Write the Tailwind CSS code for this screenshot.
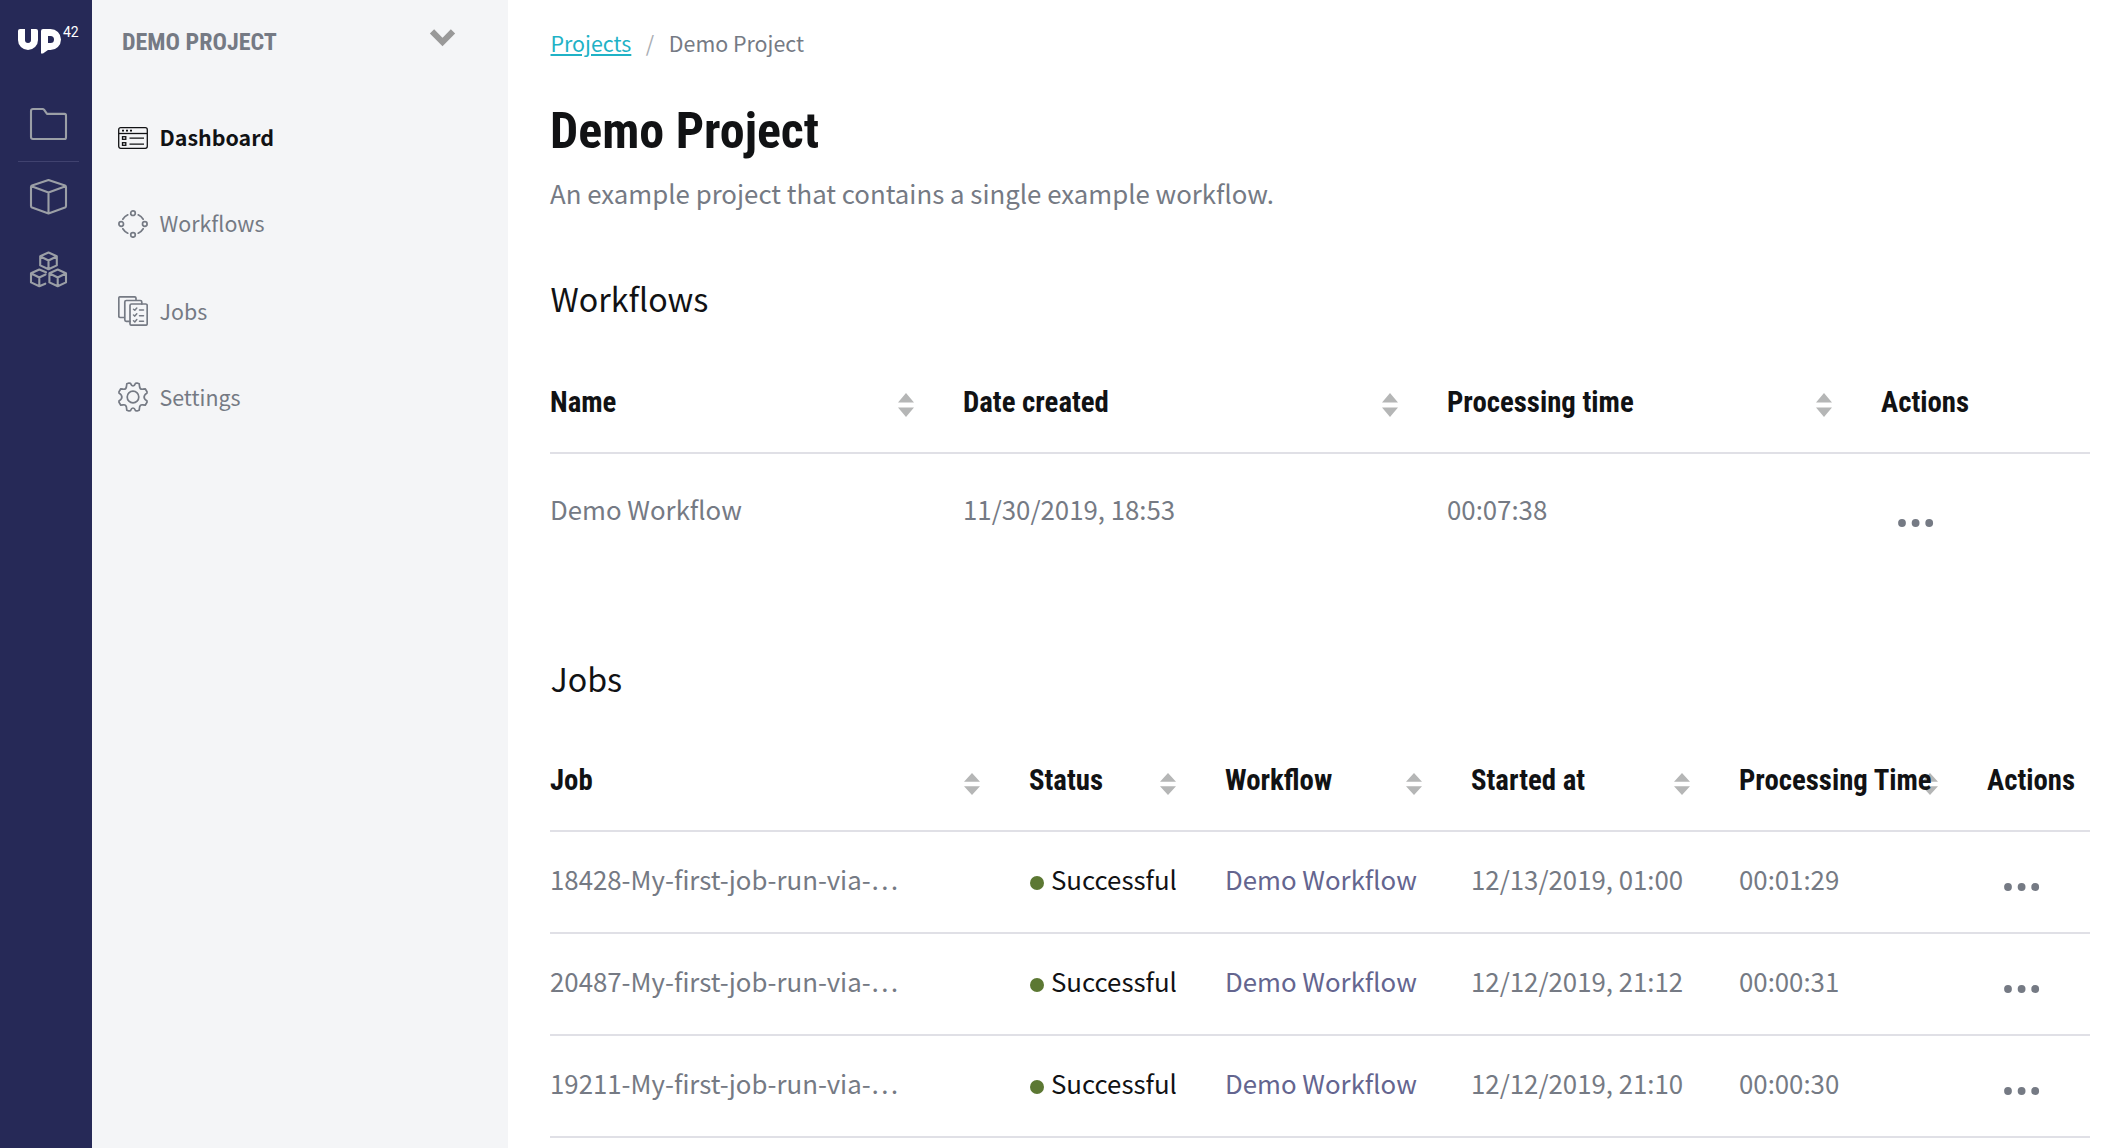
<!DOCTYPE html>
<html lang="en">
<head>
<meta charset="utf-8">
<title>Demo Project</title>
<script src="https://cdn.jsdelivr.net/npm/@tailwindcss/browser@4"></script>
</head>
<body class="bg-white">
<svg class="hidden">
  <symbol id="sort" viewBox="0 0 16 24" preserveAspectRatio="none"><path d="M8 0l8 9.500H0zM8 24l8-9.500H0z" fill="#b5b6b6"/></symbol>
  <symbol id="more" viewBox="0 0 36 8"><circle cx="4" cy="4" r="3.9"/><circle cx="17.6" cy="4" r="3.9"/><circle cx="31.2" cy="4" r="3.9"/></symbol>
</svg>
<div class="flex h-[1148px] w-[2108px] overflow-hidden font-['Noto_Sans_CJK_SC','Noto_Sans',sans-serif] text-[25.8px] leading-10 text-[#757a84]">

  <!-- Icon rail -->
  <nav class="flex w-[92px] shrink-0 flex-col bg-[#262957] text-[#9b9fa6]">
    <div class="mt-[27px] ml-[18px] flex h-[27px] w-[64px]" aria-label="UP42">
      <div class="mt-[2px] h-[21px] w-[20px] rounded-t-[2px] rounded-b-[10px] border-x-[7px] border-b-[7px] border-white"></div>
      <div class="relative mt-[2px] ml-[2.5px] h-[21px] w-[20.5px] rounded-l-[2px] rounded-r-[10.5px] border-[7px] border-white">
        <svg class="absolute top-[7px] -left-[7px] h-[11px] w-[10px]" viewBox="0 0 10 11"><path d="M0 0h7v7L2 10.500H0z" fill="#fff"/></svg>
      </div>
      <span class="ml-[2px] font-['Roboto',sans-serif] text-[14px] leading-[11px] text-white">42</span>
    </div>
    <svg class="mt-[53px] ml-[29px] h-[34px] w-[39px]" viewBox="0 0 39 34" fill="none" stroke="currentColor" stroke-width="2.1" stroke-linejoin="round"><path d="M4 2h9.500q1 0 1.700.9L18 6.900h17.500q1.500 0 1.500 1.500V30.500q0 1.500-1.500 1.500H4q-2 0-2-2V4q0-2 2-2z"/></svg>
    <div class="mt-5 ml-[18px] h-px w-[61px] bg-[#40426f]"></div>
    <svg class="mt-4 ml-[29px] h-[38px] w-[39px]" viewBox="0 0 39 38" fill="none" stroke="currentColor" stroke-width="2.1" stroke-linejoin="round" stroke-linecap="round"><path d="M19.500 2L36 7.500q1 .4 1 1.500v19q0 1-1 1.500L19.500 35.500 3 29.500q-1-.5-1-1.500V9q0-1.100 1-1.500zM2.500 8.300l17 6.200 17-6.200M19.500 14.500v21"/></svg>
    <svg class="mt-[35px] ml-[29px] h-[38px] w-[39px]" viewBox="0 0 39 38" fill="none" stroke="currentColor" stroke-width="2.1" stroke-linejoin="round" stroke-linecap="round">
      <path d="M19.500 1.500l8.300 3.700v9.200l-8.300 3.900-8.300-3.900V5.200zM11.500 5.500l8 4 8-4M19.500 9.500v8"/>
      <path d="M17 21.300l-6.700-2.800L2 22.200v9.200l8.300 3.900 6-2.600M2.300 22.500l8 4 6.200-3M10.300 26.500v8"/>
      <path d="M28.700 18.500l8.300 3.700v9.200l-8.300 3.900-8.300-3.900v-9.200zM20.700 22.500l8 4 8-4M28.700 26.500v8"/>
    </svg>
  </nav>

  <!-- Project navigation -->
  <aside class="w-[416px] shrink-0 bg-[#f4f5f7] text-[21.4px]">
    <div class="mt-[26px] flex h-8 justify-between pr-[52px] pl-[30px]">
      <span class="font-['Roboto_Condensed','Roboto',sans-serif] text-[24px] leading-8 font-bold">DEMO PROJECT</span>
      <svg class="mt-[2px] h-[20px] w-[27px]" viewBox="0 0 27 20" fill="none" stroke="#999" stroke-width="6"><path d="M3 3.300L13.500 14 24 3.300"/></svg>
    </div>
    <ul class="mt-[59px] pl-[26px]">
      <li class="flex h-10 items-center gap-[11.5px] font-bold text-[#111214]">
        <svg class="mt-[2px] h-[22px] w-[30px]" viewBox="0 0 30 22" fill="none" stroke="currentColor" stroke-width="1.300"><rect x=".7" y=".7" width="28.600" height="20.600" rx="2"/><path d="M1 6.500h28"/><path d="M4 3.600h2M8 3.600h2M12 3.600h2" stroke-width="1.800"/><rect x="4.500" y="9.700" width="3.300" height="2.600"/><rect x="4.500" y="15.700" width="3.300" height="2.600"/><path d="M11.500 11.200h14.500M11.500 17.200h14.500"/></svg>
        Dashboard</li>
      <li class="mt-[46px] flex h-10 items-center gap-[11.5px]">
        <svg class="mt-[2px] h-[28px] w-[30px]" viewBox="0 0 30 28" fill="none" stroke="currentColor" stroke-width="1.700" stroke-linecap="round"><circle cx="15" cy="3.200" r="2.300"/><circle cx="15" cy="24.900" r="2.300"/><circle cx="3.200" cy="14" r="2.300"/><circle cx="26.800" cy="14" r="2.300"/><path d="M9.800 4.800q-3.300 1.600-5 4.500M20.200 4.800q3.300 1.600 5 4.500M9.800 23.200q-3.300-1.600-5-4.500M20.200 23.200q3.300-1.600 5-4.500"/></svg>
        Workflows</li>
      <li class="mt-[48px] flex h-10 items-center gap-[11.5px]">
        <svg class="h-[30px] w-[30px]" viewBox="0 0 30 30" fill="none" stroke="currentColor" stroke-width="1.700" stroke-linejoin="round" stroke-linecap="round"><rect x="12" y="8" width="17.200" height="21.200" rx="1.500"/><path d="M12 25.300H8.300q-1.500 0-1.500-1.500V6q0-1.500 1.500-1.500h14q1.500 0 1.500 1.500v2M6.500 21.500H2.300Q.8 21.500.8 20V2.300Q.8.800 2.300.800h14.200q1.500 0 1.500 1.500v2"/><path d="M15.500 13.200l1.300 1.100 2-2.300M15.500 19l1.300 1.100 2-2.300M15.500 24.800l1.300 1.100 2-2.300M21.500 13.900h4M21.500 19.700h4M21.500 25.300h4" stroke-width="1.500"/></svg>
        Jobs</li>
      <li class="mt-[46px] flex h-10 items-center gap-[11.5px]">
        <svg class="h-[30px] w-[30px]" viewBox="0 0 30 30" fill="none" stroke="currentColor" stroke-width="1.700" stroke-linejoin="round"><circle cx="15" cy="15" r="5.800"/><path d="M11 1l-2.200.800-.4 3.200q-.5 2.500-3 2.200L2.800 6.800 1 9.800v1.200l2 1.700q1.800 2.300 0 4.600l-2 1.700v1.200l1.800 3 2.600-.4q2.500-.3 3 2.200l.4 3.200 2.200.800 1.500-.400q1-2.600 2.500-2.600t2.500 2.600l1.500.400 2.200-.800.4-3.200q.5-2.500 3-2.200l2.600.400 1.800-3V19l-2-1.700q-1.800-2.300 0-4.600l2-1.700V9.800l-1.800-3-2.600.400q-2.500.300-3-2.200l-.4-3.200L19 1l-1.500.400Q16.500 4 15 4t-2.500-2.600z"/></svg>
        Settings</li>
    </ul>
  </aside>

  <!-- Content -->
  <main class="flex w-[1582px] flex-col pt-[27px] pl-[42px]">
    <div class="flex h-8 pl-[0.5px] text-[21.4px] leading-8">
      <a class="text-[#1fb2c6] underline decoration-2 underline-offset-[2px]">Projects</a>
      <span class="ml-[14.5px] w-[23px] text-[#a9adb3]">/</span>
      <span>Demo Project</span>
    </div>
    <h1 class="mt-[42px] font-['Roboto_Condensed','Roboto',sans-serif] text-[50px] leading-[60px] font-bold text-[#111214]">Demo Project</h1>
    <p class="mt-3">An example project that contains a single example workflow.</p>

    <h2 class="mt-[61px] pl-[0.5px] text-[32.2px] leading-[48px] text-[#111214]">Workflows</h2>
    <section class="mt-[60px] w-[1540px]">
      <div class="grid h-[72px] grid-cols-[413px_484px_434px_209px] border-b-2 border-[#e0e0e6] font-['Roboto_Condensed','Roboto',sans-serif] text-[28.8px] font-bold text-[#111214]">
        <div class="flex justify-between pr-[49px]">Name<svg class="mt-[11px] h-6 w-4"><use href="#sort"/></svg></div>
        <div class="flex justify-between pr-[49px]">Date created<svg class="mt-[11px] h-6 w-4"><use href="#sort"/></svg></div>
        <div class="flex justify-between pr-[49px]">Processing time<svg class="mt-[11px] h-6 w-4"><use href="#sort"/></svg></div>
        <div>Actions</div>
      </div>
      <div class="grid grid-cols-[413px_484px_434px_209px] pt-[35px]">
        <div>Demo Workflow</div><div>11/30/2019, 18:53</div><div>00:07:38</div>
        <div class="pl-[17px]"><svg class="mt-[30px] h-2 w-9 fill-current"><use href="#more"/></svg></div>
      </div>
    </section>

    <h2 class="mt-[125px] pl-[0.5px] text-[32.2px] leading-[48px] text-[#111214]">Jobs</h2>
    <section class="mt-[58px] w-[1540px]">
      <div class="grid h-[72px] grid-cols-[479px_196px_246px_268px_248px_103px] border-b-2 border-[#e0e0e6] font-['Roboto_Condensed','Roboto',sans-serif] text-[28.8px] font-bold whitespace-nowrap text-[#111214]">
        <div class="flex justify-between pr-[49px]">Job<svg class="mt-[13px] h-[22px] w-4"><use href="#sort"/></svg></div>
        <div class="flex justify-between pr-[49px]">Status<svg class="mt-[13px] h-[22px] w-4"><use href="#sort"/></svg></div>
        <div class="flex justify-between pr-[49px]">Workflow<svg class="mt-[13px] h-[22px] w-4"><use href="#sort"/></svg></div>
        <div class="flex justify-between pr-[49px]">Started at<svg class="mt-[13px] h-[22px] w-4"><use href="#sort"/></svg></div>
        <div class="relative"><svg class="absolute top-[13px] right-[49px] h-[22px] w-4"><use href="#sort"/></svg><span class="relative">Processing Time</span></div>
        <div>Actions</div>
      </div>
      <div class="grid h-[102px] grid-cols-[479px_196px_246px_268px_248px_103px] border-b-2 border-[#e0e0e6] pt-[27px]">
        <div>18428-My-first-job-run-via-…</div>
        <div class="flex gap-[6px] pl-px text-[#111214]"><i class="mt-[17px] mr-px size-[14px] rounded-full bg-[#5c7833]"></i>Successful</div>
        <div class="text-[#64658f]">Demo Workflow</div><div>12/13/2019, 01:00</div><div>00:01:29</div>
        <div class="pl-[17px]"><svg class="mt-6 h-2 w-9 fill-current"><use href="#more"/></svg></div>
      </div>
      <div class="grid h-[102px] grid-cols-[479px_196px_246px_268px_248px_103px] border-b-2 border-[#e0e0e6] pt-[27px]">
        <div>20487-My-first-job-run-via-…</div>
        <div class="flex gap-[6px] pl-px text-[#111214]"><i class="mt-[17px] mr-px size-[14px] rounded-full bg-[#5c7833]"></i>Successful</div>
        <div class="text-[#64658f]">Demo Workflow</div><div>12/12/2019, 21:12</div><div>00:00:31</div>
        <div class="pl-[17px]"><svg class="mt-6 h-2 w-9 fill-current"><use href="#more"/></svg></div>
      </div>
      <div class="grid h-[102px] grid-cols-[479px_196px_246px_268px_248px_103px] border-b-2 border-[#e0e0e6] pt-[27px]">
        <div>19211-My-first-job-run-via-…</div>
        <div class="flex gap-[6px] pl-px text-[#111214]"><i class="mt-[17px] mr-px size-[14px] rounded-full bg-[#5c7833]"></i>Successful</div>
        <div class="text-[#64658f]">Demo Workflow</div><div>12/12/2019, 21:10</div><div>00:00:30</div>
        <div class="pl-[17px]"><svg class="mt-6 h-2 w-9 fill-current"><use href="#more"/></svg></div>
      </div>
    </section>
  </main>
</div>
</body>
</html>
